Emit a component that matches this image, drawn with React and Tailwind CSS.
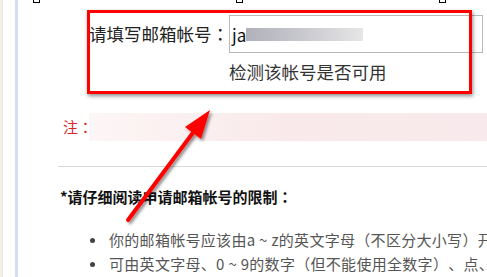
import React from "react";

const FONT = { fontFamily: '"Microsoft YaHei", "Noto Sans CJK SC", "Noto Sans", sans-serif' };

// full-width colon centred in its box, like YaHei
const Colon = () => (
  <span style={{ fontFamily: '"Noto Sans CJK TC", sans-serif' }}>：</span>
);

const Handle = ({ left }) => (
  <div
    className="absolute top-[-4px] w-[7px] h-[7px] bg-white border border-black"
    style={{ left }}
  />
);

const Arrow = () => (
  <svg className="absolute left-0 top-0 pointer-events-none" width="487" height="277" viewBox="0 0 487 277">
    <defs>
      <filter id="sh" x="-20%" y="-20%" width="140%" height="140%">
        <feDropShadow dx="2" dy="2" stdDeviation="1.6" floodColor="#000" floodOpacity="0.45" />
      </filter>
    </defs>
    <g filter="url(#sh)">
      <line x1="128" y1="220" x2="195" y2="130" stroke="#ff0000" strokeWidth="4" strokeLinecap="round" />
      <polygon points="210,110 201,139 185,127" fill="#ff0000" />
    </g>
  </svg>
);

export default function App() {
  return (
    <div
      className="relative w-[487px] h-[277px] overflow-hidden bg-white flex [text-spacing-trim:space-all]"
      style={FONT}
    >
      {/* left gutter */}
      <div className="w-[15px] shrink-0 flex">
        <div className="w-[2px] bg-[#f6efe8]" />
        <div className="w-[1px] bg-[#e4e4e4]" />
      </div>
      <div className="w-[3px] shrink-0 bg-[#d3def0]" />

      {/* page content */}
      <div className="flex-1 flex flex-col min-w-0">
        <div className="flex items-center pt-[15px] pl-[71px]">
          <div className="w-[140px] shrink-0 text-[17.5px] leading-[24px] text-[#222] whitespace-nowrap">
            请填写邮箱帐号<Colon />
          </div>
          <div className="w-[254px] h-[38px] shrink-0 border border-[#b8b8b8] bg-white flex items-center pl-[2px]">
            <span className="text-[17px] text-[#111] leading-none">ja</span>
            <div className="w-[117px] h-[13px] mt-[1px] bg-gradient-to-r from-[#b1b1bb] via-[#c9c9cf] to-[#e6e6e6] blur-[0.6px]" />
          </div>
        </div>

        <div className="mt-[7px] pl-[211px] text-[17.5px] leading-[24px] text-[#333] whitespace-nowrap">
          检测该帐号是否可用
        </div>

        <div className="mt-[29px] flex pl-[45px] h-[28px]">
          <span className="w-[26px] shrink-0 text-[15px] leading-[28px] text-[#d9262c] whitespace-nowrap">
            注<Colon />
          </span>
          <div className="flex-1 bg-gradient-to-r from-[#fdf6f6] via-[#f9e9eb] to-[#f8eaec]" />
        </div>

        <div className="mt-[25px] ml-[40px] border-t border-[#d8d8d8]" />

        <div className="mt-[19px] pl-[42px] text-[15px] leading-[22px] font-bold text-[#111] whitespace-nowrap">
          *请仔细阅读申请邮箱帐号的限制<Colon />
        </div>

        <div className="mt-[20px] flex flex-col text-[15px] leading-[24px] tracking-[0.3px] text-[#555] whitespace-nowrap overflow-hidden">
          <div className="flex items-center pl-[72px]">
            <span className="w-[5px] h-[5px] rounded-full bg-[#444] shrink-0 mr-[14px]" />
            <span>你的邮箱帐号应该由a ~ z的英文字母（不区分大小写）开头</span>
          </div>
          <div className="flex items-center pl-[72px]">
            <span className="w-[5px] h-[5px] rounded-full bg-[#444] shrink-0 mr-[14px]" />
            <span>可由英文字母、0 ~ 9的数字（但不能使用全数字）、点、减号或下划线组成</span>
          </div>
        </div>
      </div>

      {/* resize handles */}
      <Handle left="33px" />
      <Handle left="236px" />
      <Handle left="439px" />

      {/* red annotation box */}
      <div className="absolute left-[87px] top-[10px] w-[385px] h-[84px] border-[3px] border-[#ff0000] shadow-[1px_2px_4px_rgba(0,0,0,0.45)]" />

      <Arrow />
    </div>
  );
}
